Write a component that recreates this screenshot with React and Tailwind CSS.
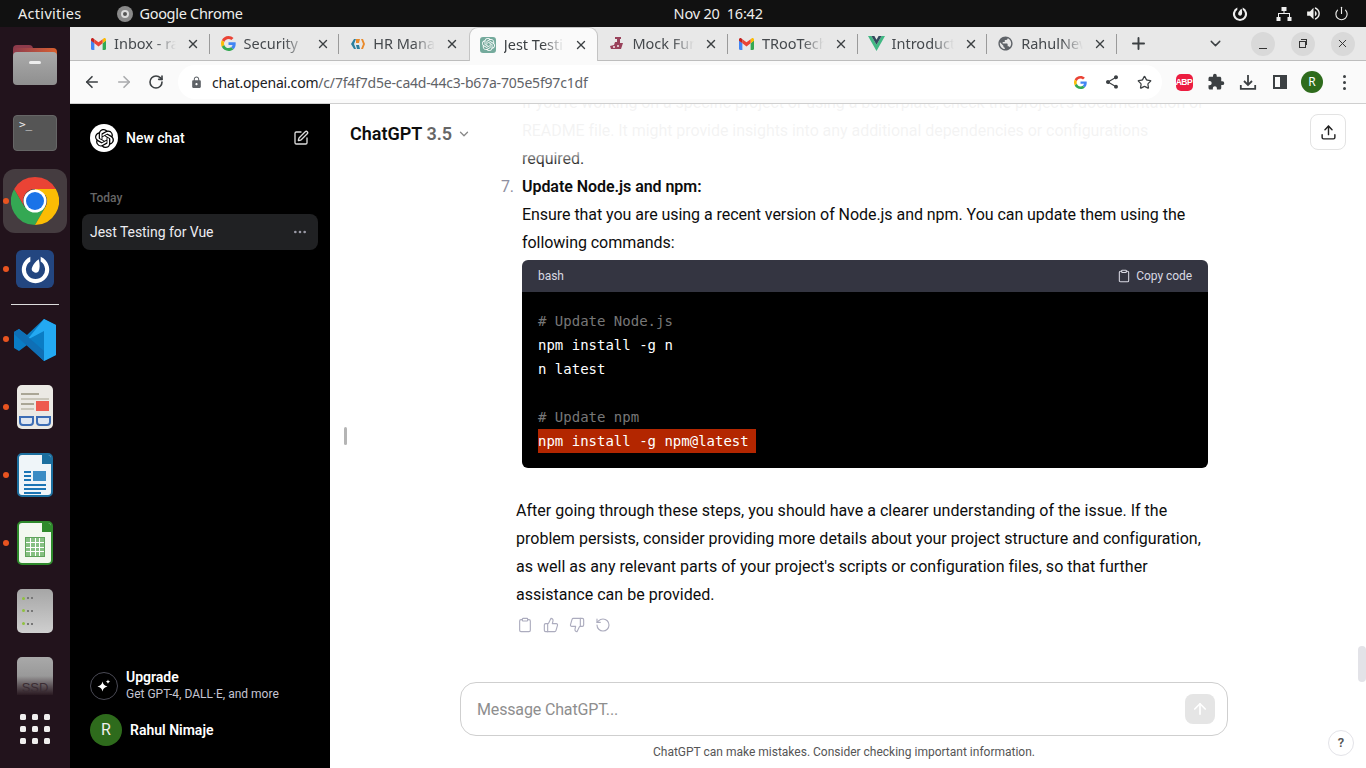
import React from "react";
import {
  ArrowLeft,
  ArrowRight,
  RotateCw,
  X,
  Plus,
  ChevronDown,
  Star,
  Power,
  SquarePen,
  Ellipsis,
  Clipboard,
  ThumbsUp,
  ThumbsDown,
  RotateCcw,
  ArrowUp,
  Upload,
} from "lucide-react";
import { MdLock, MdShare, MdExtension, MdVolumeUp, MdPublic } from "react-icons/md";
import { SiOpenai } from "react-icons/si";

const chromeFont = "font-['Noto_Sans',sans-serif]";

function GmailIcon({ size = 16 }) {
  return (
    <svg width={size} height={size * 0.8} viewBox="0 0 20 16">
      <path d="M0 3v11a2 2 0 0 0 2 2h2.500V7L0 3z" fill="#4285f4" />
      <path d="M15.500 16H18a2 2 0 0 0 2-2V3l-4.500 4v9z" fill="#34a853" />
      <path d="M15.500 1.500V7L20 3.500V2c0-1.700-2-2.700-3.200-1.500l-1.300 1z" fill="#fbbc04" />
      <path d="M4.500 7V1.500L10 5.800l5.500-4.300V7L10 11.200 4.500 7z" fill="#ea4335" />
      <path d="M0 2v1.500L4.500 7V1.500L3.200.5C2 -.7 0 .3 0 2z" fill="#c5221f" />
    </svg>
  );
}

function GoogleIcon({ size = 16 }) {
  return (
    <svg width={size} height={size} viewBox="0 0 48 48">
      <path fill="#ea4335" d="M24 9.500c3.500 0 6.700 1.200 9.200 3.600l6.900-6.900C35.900 2.400 30.500 0 24 0 14.600 0 6.500 5.400 2.600 13.200l8 6.200C12.400 13.700 17.700 9.500 24 9.500z" />
      <path fill="#4285f4" d="M47 24.500c0-1.600-.1-3.100-.4-4.500H24v9h13c-.6 3-2.200 5.500-4.800 7.200l7.700 6C44.400 38 47 31.800 47 24.500z" />
      <path fill="#fbbc05" d="M10.500 28.600c-.5-1.400-.8-3-.8-4.600s.3-3.200.8-4.600l-8-6.200C.9 16.500 0 20.100 0 24s.9 7.500 2.600 10.800l7.900-6.200z" />
      <path fill="#34a853" d="M24 48c6.500 0 11.900-2.100 15.900-5.800l-7.700-6c-2.200 1.400-4.900 2.300-8.200 2.300-6.300 0-11.600-4.200-13.500-10l-7.900 6.200C6.500 42.600 14.600 48 24 48z" />
    </svg>
  );
}

function HrIcon() {
  return (
    <svg width="16" height="16" viewBox="0 0 16 16">
      <path d="M1 8l3-5h2L4 8l2 5H4z" fill="#2b7f9e" />
      <path d="M6 3h4l-1 4H6z" fill="#e98a2c" />
      <path d="M6 9h3l1 4H7z" fill="#2b7f9e" />
      <path d="M11 3h2l2 5-2 5h-2l2-5z" fill="#e98a2c" />
    </svg>
  );
}

function MockIcon() {
  return (
    <svg width="15" height="15" viewBox="0 0 15 15">
      <path d="M6 1h6v2h-1v4h3l-2 6H2l-1-3 4-1 1-3h2V3H6z" fill="#99425b" />
      <circle cx="5" cy="11" r="1" fill="#f3e6ea" />
      <circle cx="9" cy="10" r="1" fill="#f3e6ea" />
    </svg>
  );
}

function VueIcon() {
  return (
    <svg width="17" height="15" viewBox="0 0 17 15">
      <path d="M0 0h3.400l5.100 8.800L13.600 0H17L8.500 15z" fill="#41b883" />
      <path d="M3.400 0h3l2.100 3.700L10.600 0h3L8.500 8.800z" fill="#34495e" />
    </svg>
  );
}

function GptTabIcon() {
  return (
    <div className="w-4 h-4 rounded-[3px] bg-[#74aa9c] flex items-center justify-center">
      <SiOpenai className="text-white" size={13} />
    </div>
  );
}

const tabs = [
  { title: "Inbox - rahul", icon: <GmailIcon size={15} /> },
  { title: "Security", icon: <GoogleIcon size={15} /> },
  { title: "HR Management", icon: <HrIcon /> },
  { title: "Jest Testing", icon: <GptTabIcon />, active: true },
  { title: "Mock Functions", icon: <MockIcon /> },
  { title: "TRooTech", icon: <GmailIcon size={15} /> },
  { title: "Introduction", icon: <VueIcon /> },
  { title: "RahulNew", icon: <MdPublic size={17} className="text-[#5f6368]" /> },
];

function Tab({ tab, hideSeparator }) {
  return (
    <div
      className={`relative w-[129.6px] shrink-0 flex items-center ${
        tab.active
          ? "h-[34px] pl-[10px] bg-[#fafafa] rounded-t-[9px] border border-b-0 border-[#c4c4c4] z-10"
          : "h-[33px] pl-[10px]"
      }`}
    >
      <div className="w-[17px] flex items-center justify-center shrink-0">{tab.icon}</div>
      <div
        className={`ml-[7px] overflow-hidden whitespace-nowrap text-[14.5px] [mask-image:linear-gradient(to_right,black_65%,transparent)] ${
          tab.active ? "w-[60px] text-[#3c4043]" : "w-[62px] text-[#45494d]"
        }`}
      >
        {tab.title}
      </div>
      <X size={14} strokeWidth={2.4} className="ml-[10px] text-[#3c4043] shrink-0" />
      {!tab.active && !hideSeparator && (
        <div className="absolute right-0 top-[7px] h-[20px] w-px bg-[#9a9a9a]" />
      )}
    </div>
  );
}

function TabBar() {
  return (
    <div className="h-[34px] shrink-0 bg-[#e8e8e8] border-b border-[#bdbdbd] flex items-start pl-[10px]">
      {tabs.map((tab, i) => (
        <Tab key={tab.title} tab={tab} hideSeparator={i === 2} />
      ))}
      <div className="w-[43px] h-[33px] flex items-center justify-center">
        <Plus size={19} strokeWidth={2.4} className="text-[#3c4043]" />
      </div>
      <div className="ml-[44px] w-[24px] h-[33px] flex items-center justify-center">
        <ChevronDown size={17} strokeWidth={2} className="text-[#3c4043]" />
      </div>
      <div className="ml-[23px] flex gap-[16px] h-[33px] items-center">
        <div className="w-[24px] h-[24px] rounded-full bg-[#d9d9d9] flex items-end justify-center pb-[7px]">
          <div className="w-[8px] h-px bg-[#333]" />
        </div>
        <div className="w-[24px] h-[24px] rounded-full bg-[#d9d9d9] flex items-center justify-center">
          <div className="relative w-[7px] h-[7px] mt-[1px] border border-[#333]">
            <div className="absolute -top-[3px] left-[1px] w-[6px] h-[6px] border-t border-r border-[#333]" />
          </div>
        </div>
        <div className="w-[24px] h-[24px] rounded-full bg-[#d9d9d9] flex items-center justify-center">
          <X size={13} strokeWidth={1.8} className="text-[#333]" />
        </div>
      </div>
    </div>
  );
}

function ToolButton({ children }) {
  return <div className="w-[32px] h-[32px] flex items-center justify-center shrink-0">{children}</div>;
}

function Toolbar() {
  return (
    <div className="h-[43px] shrink-0 bg-[#fafafa] border-b border-[#cfcfcf] flex items-center pl-[6px] text-[#3c4043]">
      <ToolButton>
        <ArrowLeft size={18} strokeWidth={2.2} />
      </ToolButton>
      <ToolButton>
        <ArrowRight size={18} strokeWidth={2.2} className="text-[#a9abad]" />
      </ToolButton>
      <ToolButton>
        <RotateCw size={16} strokeWidth={2.4} />
      </ToolButton>
      <div className="ml-[6px] w-[984px] h-[34px] rounded-full bg-white flex items-center pl-[12px] pr-[2px]">
        <MdLock size={13} className="text-[#5f6368] shrink-0" />
        <div className="ml-[9px] text-[14px] tracking-[-0.19px] text-[#202124] whitespace-nowrap">
          chat.openai.com<span className="text-[#5f6368]">/c/7f4f7d5e-ca4d-44c3-b67a-705e5f97c1df</span>
        </div>
        <div className="ml-auto flex items-center">
          <ToolButton>
            <GoogleIcon size={13} />
          </ToolButton>
          <ToolButton>
            <MdShare size={16} />
          </ToolButton>
          <ToolButton>
            <Star size={15} strokeWidth={2} />
          </ToolButton>
        </div>
      </div>
      <div className="ml-[6px] flex items-center">
        <ToolButton>
          <div className="w-[17px] h-[17px] rounded-[5px] bg-[#ec1d40] flex items-center justify-center text-[8.5px] tracking-[-0.4px] font-bold text-white font-['Liberation_Sans',sans-serif]">
            ABP
          </div>
        </ToolButton>
        <ToolButton>
          <MdExtension size={18} />
        </ToolButton>
        <ToolButton>
          <svg width="18" height="18" viewBox="0 0 18 18" fill="none" stroke="currentColor" strokeWidth="1.800">
            <path d="M9 2v9.500M5 8l4 4 4-4M1.800 12v3.800h14.400V12" />
          </svg>
        </ToolButton>
        <ToolButton>
          <div className="w-[14px] h-[14px] border-2 border-[#3c4043] flex justify-end">
            <div className="w-[5px] h-full bg-[#3c4043]" />
          </div>
        </ToolButton>
        <ToolButton>
          <div className="w-[22px] h-[22px] rounded-full bg-[#2e6b1c] text-white text-[12px] flex items-center justify-center">
            R
          </div>
        </ToolButton>
        <ToolButton>
          <div className="flex flex-col gap-[3px]">
            <div className="w-[3px] h-[3px] rounded-full bg-[#3c4043]" />
            <div className="w-[3px] h-[3px] rounded-full bg-[#3c4043]" />
            <div className="w-[3px] h-[3px] rounded-full bg-[#3c4043]" />
          </div>
        </ToolButton>
      </div>
    </div>
  );
}

function ChromeLogo({ size = 48 }) {
  return (
    <svg width={size} height={size} viewBox="0 0 48 48">
      <path d="M3.200 12 13.600 30h20.800L24 48A24 24 0 0 1 3.200 12z" fill="#34a853" />
      <path d="M24 0a24 24 0 0 1 20.800 12H24a12 12 0 0 0-10.400 18L3.200 12A24 24 0 0 1 24 0z" fill="#ea4335" />
      <path d="M44.800 12A24 24 0 0 1 24 48l10.400-18a12 12 0 0 0 0-12H24v-6z" fill="#fbbc04" />
      <circle cx="24" cy="24" r="11.500" fill="#fff" />
      <circle cx="24" cy="24" r="9" fill="#1a73e8" />
    </svg>
  );
}

function MattermostLogo({ size = 24, color = "#fff" }) {
  return (
    <svg width={size} height={size} viewBox="0 0 24 24">
      <path d="M8 2.200A10.600 10.600 0 1 0 16 2.200V5.800A7.400 7.400 0 1 1 8 5.800z" fill={color} />
      <path d="M14.500 4C15.500 8 15.500 11.500 14.300 13.500A3 3 0 0 1 9.500 10C10.300 8 12 5.500 14.500 4z" fill={color} />
    </svg>
  );
}

function DockItem({ dot, children }) {
  return (
    <div className="relative w-full h-[68px] flex items-center justify-center">
      {dot && <div className="absolute left-[3px] top-[31px] w-[6px] h-[6px] rounded-full bg-[#e95420]" />}
      {children}
    </div>
  );
}

function Dock() {
  return (
    <div className="w-[70px] shrink-0 bg-[#22131c] pt-[4px] flex flex-col items-center">
      <DockItem>
        <div className="relative w-[44px] h-[40px]">
          <div className="absolute top-0 left-0 w-[20px] h-[10px] rounded-t-[4px] bg-[#8e3b4b]" />
          <div className="absolute top-[3px] left-0 right-0 h-[10px] rounded-t-[4px] bg-linear-to-r from-[#8e3b4b] to-[#d9602c]" />
          <div className="absolute top-[7px] bottom-0 left-0 right-0 rounded-[4px] bg-linear-to-b from-[#aaa] to-[#8f8f8f] flex justify-center pt-[9px]">
            <div className="w-[12px] h-[3px] rounded-sm bg-[#eee]" />
          </div>
        </div>
      </DockItem>
      <DockItem>
        <div className="w-[44px] h-[36px] rounded-[4px] bg-[#555] border border-[#666] font-['DejaVu_Sans_Mono',monospace] text-[11px] leading-[11px] text-[#eee] pl-[5px] pt-[3px]">
          &gt;_
        </div>
      </DockItem>
      <DockItem dot>
        <div className="w-[64px] h-[64px] rounded-[12px] bg-[#453c40] flex items-center justify-center">
          <ChromeLogo />
        </div>
      </DockItem>
      <DockItem dot>
        <div className="w-[38px] h-[38px] rounded-[6px] bg-[#234680] flex items-center justify-center">
          <MattermostLogo size={31} />
        </div>
      </DockItem>
      <div className="w-[48px] h-px mt-px bg-[#ddd]" />
      <DockItem dot>
        <svg width="42" height="42" viewBox="0 0 42 42" className="mt-[2px]">
          <path d="M30 0l12 6v30l-12 6-17-16-8 6-5-3V13l5-3 8 6z" fill="#0a7cc4" />
          <path d="M30 0l12 6v30l-12 6V12l-17 9z" fill="#23a9f2" />
          <path d="M0 13l5-3 25 22v10L0 15z" fill="#0f6fb5" />
        </svg>
      </DockItem>
      <DockItem dot>
        <div className="relative w-[36px] h-[44px] rounded-[5px] bg-[#ebe9e4] overflow-hidden pt-[8px] px-[4px]">
          <div className="h-[2px] w-[18px] bg-[#aaa696]" />
          <div className="h-[2px] w-[28px] mt-[3px] bg-[#c9c6ba]" />
          <div className="h-[2px] w-[13px] mt-[3px] bg-[#aaa696]" />
          <div className="h-[2px] w-[13px] mt-[3px] bg-[#c9c6ba]" />
          <div className="absolute right-[4px] top-[16px] w-[13px] h-[10px] bg-[#ee5a4f]" />
          <div className="absolute left-[2px] top-[31px] flex gap-[2px]">
            <div className="w-[15px] h-[10px] rounded-b-[4px] border-2 border-[#3d6db5] bg-[#dfe6f0]" />
            <div className="w-[15px] h-[10px] rounded-b-[4px] border-2 border-[#3d6db5] bg-[#dfe6f0]" />
          </div>
        </div>
      </DockItem>
      <DockItem dot>
        <div className="relative w-[36px] h-[44px] rounded-[5px] bg-[#eff5f9] border-2 border-[#1c6f9f] overflow-hidden p-[5px]">
          <div className="absolute -right-[1px] -top-[1px] w-[10px] h-[10px] bg-[#1c6f9f]" />
          <div className="mt-[11px] flex gap-[2px]">
            <div className="flex-1">
              <div className="h-[2px] bg-[#1c75b5]" />
              <div className="h-[2px] mt-[2px] bg-[#1c75b5]" />
              <div className="h-[2px] mt-[2px] bg-[#1c75b5]" />
            </div>
            <div className="w-[13px] h-[10px] bg-[#3b8cc4]" />
          </div>
          <div className="h-[2px] mt-[3px] bg-[#1c75b5]" />
          <div className="h-[2px] mt-[2px] bg-[#1c75b5]" />
          <div className="h-[2px] mt-[2px] w-[17px] bg-[#1c75b5]" />
        </div>
      </DockItem>
      <DockItem dot>
        <div className="relative w-[36px] h-[44px] rounded-[5px] bg-[#f3f8f0] border-2 border-[#2f8a2c] overflow-hidden">
          <div className="absolute -right-[1px] -top-[1px] w-[10px] h-[10px] bg-[#2f8a2c]" />
          <div className="mt-[14px] ml-[6px] w-[20px] h-[20px] grid grid-cols-4 gap-px bg-[#fff] border border-[#5fa35b]">
            {Array.from({ length: 16 }).map((_, i) => (
              <div key={i} className="bg-[#86c083]" />
            ))}
          </div>
        </div>
      </DockItem>
      <DockItem>
        <div className="w-[36px] h-[44px] rounded-[5px] bg-linear-to-b from-[#a6a6a6] to-[#cfcfcf] flex flex-col justify-around py-[3px] pl-[5px]">
          {[0, 1, 2].map((i) => (
            <div key={i} className="flex gap-[2px] items-center">
              <div className="w-[3px] h-[3px] rounded-full bg-[#8fc13f]" />
              <div className="w-[2px] h-[2px] bg-[#777]" />
              <div className="w-[2px] h-[2px] bg-[#777]" />
            </div>
          ))}
        </div>
      </DockItem>
      <DockItem>
        <div className="w-[36px] h-[38px] mb-[6px] rounded-t-[5px] bg-linear-to-b from-[#a9a9a9] via-[#999] to-[#2a1a22] flex items-end justify-center overflow-hidden">
          <span className="font-['Liberation_Sans',sans-serif] text-[13px] leading-[14px] text-[#3a2c33]">SSD</span>
        </div>
      </DockItem>
      <div className="mt-px grid grid-cols-3 gap-x-[6px] gap-y-[6px]">
        {Array.from({ length: 9 }).map((_, i) => (
          <div key={i} className="w-[6px] h-[6px] rounded-[1.500px] bg-[#f0eeee]" />
        ))}
      </div>
    </div>
  );
}

function TopBar() {
  return (
    <div className={`h-[27px] shrink-0 bg-[#111] flex items-center text-[#eeeeec] text-[14.500px] ${chromeFont}`}>
      <div className="ml-[18px] tracking-[0.3px]">Activities</div>
      <div className="ml-[36px] w-[16px] h-[16px] rounded-full bg-[#8a8a8a] flex items-center justify-center">
        <div className="w-[8px] h-[8px] rounded-full border-2 border-[#ddd] bg-[#555]" />
      </div>
      <div className="ml-[6px] tracking-[-0.3px]">Google Chrome</div>
      <div className="ml-[431px] whitespace-pre tracking-[-0.2px]">Nov 20  16:42</div>
      <div className="ml-auto flex items-center pr-[17px]">
        <MattermostLogo size={16} color="#eee" />
        <svg width="16" height="14" viewBox="0 0 16 14" fill="#eee" className="ml-[28px]">
          <path d="M5.500 0h5v4h-2v2H14v4h1.500v4h-4v-4H13V7H3v3h1.500v4h-4v-4H2V6h5.500V4h-2z" />
        </svg>
        <MdVolumeUp size={17} className="ml-[13px]" />
        <Power size={15} strokeWidth={1.8} className="ml-[12px]" />
      </div>
    </div>
  );
}

function Sidebar() {
  return (
    <div className="w-[260px] shrink-0 bg-black flex flex-col text-white font-['Roboto',sans-serif]">
      <div className="flex items-center pl-[20px] pr-[20px] pt-[20px]">
        <div className="w-[28px] h-[28px] rounded-full bg-white flex items-center justify-center">
          <SiOpenai size={19} className="text-black" />
        </div>
        <div className="ml-[8px] pt-[1px] text-[14px] font-medium">New chat</div>
        <SquarePen size={16} strokeWidth={2} className="ml-auto mr-[1px] text-[#ddd]" />
      </div>
      <div className="mt-[37px] pl-[20px] text-[12px] font-medium text-[#666]">Today</div>
      <div className="mx-[12px] mt-[7px] h-[36px] rounded-lg bg-[#202123] flex items-center pl-[8px] pr-[10px]">
        <span className="pt-[1px] text-[14px] text-[#ececf1] tracking-[-0.05px]">Jest Testing for Vue</span>
        <Ellipsis size={16} className="ml-auto text-[#9a9aa6]" />
      </div>
      <div className="mt-auto pl-[20px] flex items-center">
        <div className="w-[28px] h-[28px] rounded-full border border-[#4a4a55] flex items-center justify-center">
          <svg width="14" height="14" viewBox="0 0 14 14" fill="#fff">
            <path d="M5.500 2.500c.7 3 1.800 4.100 5 5-3.200.9-4.300 2-5 5-.7-3-1.800-4.100-5-5 3.200-.9 4.300-2 5-5z" />
            <path d="M11 .5c.3 1.300.8 1.800 2.200 2.200-1.400.4-1.900.9-2.200 2.200-.3-1.300-.8-1.800-2.200-2.200C10.200 2.300 10.700 1.800 11 .5z" />
          </svg>
        </div>
        <div className="ml-[8px]">
          <div className="text-[14px] leading-[17px] font-semibold">Upgrade</div>
          <div className="text-[12px] leading-[16px] text-[#c5c5d2]">Get GPT-4, DALL·E, and more</div>
        </div>
      </div>
      <div className="mt-[12px] mb-[22px] pl-[20px] flex items-center">
        <div className="w-[32px] h-[32px] rounded-full bg-[#2e6b1c] flex items-center justify-center text-[16px] text-[#eee]">
          R
        </div>
        <div className="ml-[8px] text-[14px] font-semibold">Rahul Nimaje</div>
      </div>
    </div>
  );
}

function CodeBlock() {
  const mono = "font-['DejaVu_Sans_Mono',monospace] tracking-normal";
  return (
    <div className="mt-[3px] rounded-md overflow-hidden">
      <div className="h-[32px] bg-[#343541] flex items-center justify-between px-[16px] text-[12px] text-[#d9d9e3]">
        <span>bash</span>
        <span className="flex items-center gap-[5px]">
          <Clipboard size={14} strokeWidth={1.8} />
          Copy code
        </span>
      </div>
      <div className={`bg-black pt-[17px] pb-[15px] px-[16px] text-[14px] leading-[24px] text-white ${mono}`}>
        <div className="text-[#777]"># Update Node.js</div>
        <div>npm install -g n</div>
        <div>n latest</div>
        <div className="h-[24px]" />
        <div className="text-[#777]"># Update npm</div>
        <div className="bg-[#b32600] w-[218px]">npm install -g npm@latest</div>
      </div>
    </div>
  );
}

function ChatBody() {
  return (
    <div className="relative flex-1 min-h-0 overflow-hidden">
      <div className="ml-[186px] w-[692px] -mt-[15px] text-[16px] leading-[28px] text-[#0d0d0d] tracking-[-0.05px] font-['Roboto',sans-serif]">
        <div className="pl-[6px] whitespace-nowrap">
          <div>If you're working on a specific project or using a boilerplate, check the project's documentation or</div>
          <div>README file. It might provide insights into any additional dependencies or configurations</div>
          <div>required.</div>
        </div>
        <div className="-ml-[20px] flex gap-[8px]">
          <div className="w-[18px] text-right text-[#8e8ea0] shrink-0">7.</div>
          <div className="flex-1 min-w-0">
            <div className="font-semibold">Update Node.js and npm:</div>
            <div>Ensure that you are using a recent version of Node.js and npm. You can update them using the following commands:</div>
            <CodeBlock />
          </div>
        </div>
        <p className="mt-[29px] tracking-[0.02px]">
          After going through these steps, you should have a clearer understanding of the issue. If the problem persists, consider providing more details about your project structure and configuration, as well as any relevant parts of your project's scripts or configuration files, so that further assistance can be provided.
        </p>
        <div className="mt-[8px] ml-[1px] flex gap-[10px] text-[#acacbe]">
          <Clipboard size={16} strokeWidth={1.7} />
          <ThumbsUp size={16} strokeWidth={1.7} />
          <ThumbsDown size={16} strokeWidth={1.7} />
          <RotateCcw size={16} strokeWidth={1.7} />
        </div>
      </div>

      {/* fade and header sit above the scrolled text */}
      <div className="absolute top-0 left-0 right-0 h-[62px] bg-linear-to-b from-white/95 via-white/95 via-70% to-transparent" />
      <div className="absolute top-[16px] left-[20px] flex items-center text-[18px] font-semibold text-[#0d0d0d] font-['Roboto',sans-serif]">
        ChatGPT<span className="ml-[4px] text-[#666]">3.5</span>
        <ChevronDown size={14} strokeWidth={2.2} className="ml-[5px] mt-[1px] text-[#888]" />
      </div>
      <div className="absolute top-[10px] right-[20px] w-[36px] h-[36px] rounded-lg border border-[#e3e3e3] bg-white flex items-center justify-center">
        <Upload size={17} strokeWidth={2} className="text-[#222]" />
      </div>
      <div className="absolute left-[14px] top-[323px] w-[3px] h-[18px] rounded-full bg-[#b5b5b5]" />
      <div className="absolute right-0 top-[542px] w-[8px] h-[36px] rounded-full bg-[#e3e3e8]" />
    </div>
  );
}

function Composer() {
  return (
    <div className="relative h-[86px] shrink-0 font-['Roboto',sans-serif]">
      <div className="ml-[130px] w-[768px] h-[54px] rounded-2xl border border-[#cfcfcf] bg-white flex items-center pl-[16px] pr-[12px]">
        <span className="pt-[1px] text-[16px] text-[#8e8e8e] tracking-[-0.15px]">Message ChatGPT...</span>
        <div className="ml-auto w-[30px] h-[30px] rounded-lg bg-[#e5e5e5] flex items-center justify-center">
          <ArrowUp size={18} strokeWidth={2.2} className="text-white" />
        </div>
      </div>
      <div className="ml-[130px] w-[768px] mt-[7px] text-center text-[12px] text-[#555]">
        ChatGPT can make mistakes. Consider checking important information.
      </div>
      <div className="absolute right-[12px] bottom-[12px] w-[26px] h-[26px] rounded-full border border-[#e3e3e8] bg-white flex items-center justify-center text-[13px] font-semibold text-[#555]">
        ?
      </div>
    </div>
  );
}

export default function App() {
  return (
    <div className="w-[1366px] h-[768px] overflow-hidden flex flex-col">
      <TopBar />
      <div className="flex-1 min-h-0 flex">
        <Dock />
        <div className={`flex-1 min-w-0 flex flex-col ${chromeFont}`}>
          <TabBar />
          <Toolbar />
          <div className="flex-1 min-h-0 flex">
            <Sidebar />
            <div className="flex-1 min-w-0 bg-white flex flex-col">
              <ChatBody />
              <Composer />
            </div>
          </div>
        </div>
      </div>
    </div>
  );
}
